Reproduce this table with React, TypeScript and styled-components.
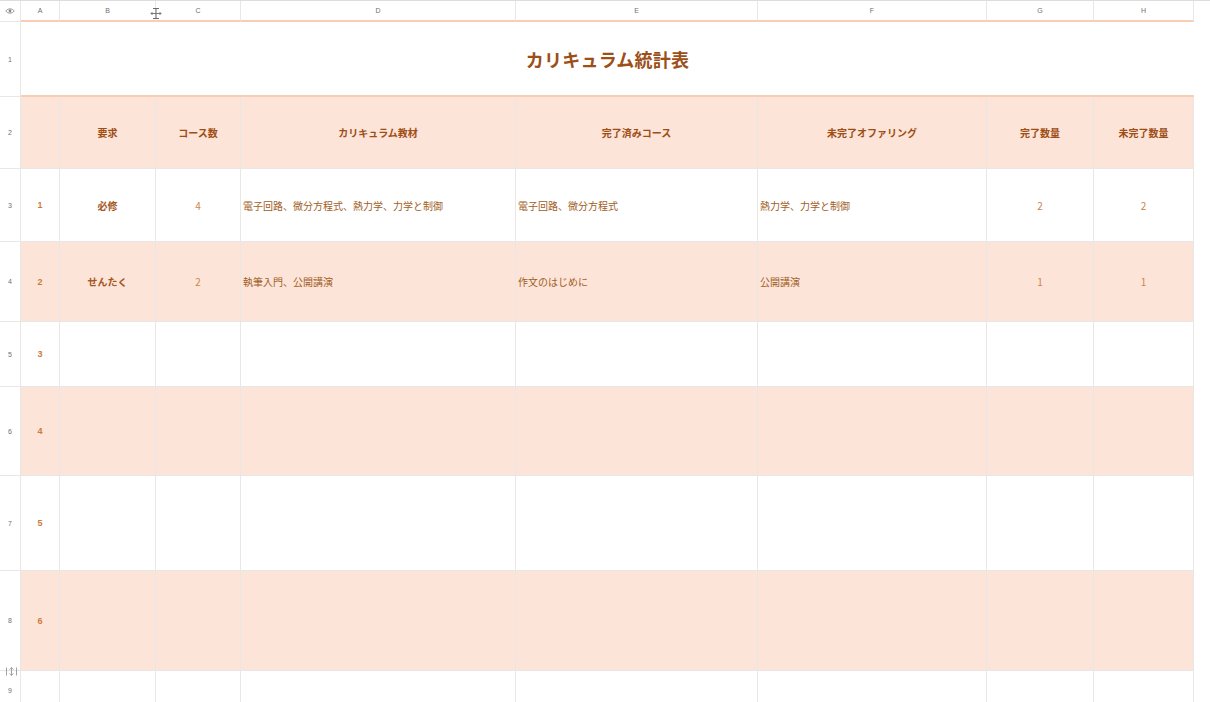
import React from "react";
import styled, { createGlobalStyle, css } from "styled-components";

const Global = createGlobalStyle`
  html, body { margin: 0; padding: 0; background: #ffffff; overflow: hidden; }
  body { font-family: "Noto Sans CJK JP", "Noto Sans", sans-serif; }
`;

const FILL = "#fce4d8";
const GRID = "#e9e7e6";
const ORANGE_LINE = "#f7cdb4";

const Sheet = styled.div`
  position: relative;
  display: grid;
  grid-template-columns: 21px 39px 96px 85px 275px 242px 229px 107px 100px 16px;
  grid-template-rows: 21px 75px 72px 73px 80px 65px 89px 95px 100px 40px;
  width: 1210px;
  height: 702px;
  overflow: hidden;
  border-top: 1px solid #dcdcdc;
  box-sizing: border-box;
`;

const ColHead = styled.div<{ $last?: boolean }>`
  box-sizing: border-box;
  display: flex;
  align-items: center;
  justify-content: center;
  font-family: "Liberation Sans", "Noto Sans", sans-serif;
  font-size: 7px;
  color: #6f6f6f;
  background: #ffffff;
  border-right: 1px solid ${GRID};
  border-bottom: 2px solid ${ORANGE_LINE};
`;

const Corner = styled(ColHead)`
  border-bottom: 1px solid ${GRID};
`;

const Spacer = styled.div``;

const RowNum = styled.div`
  box-sizing: border-box;
  display: flex;
  align-items: center;
  justify-content: center;
  font-family: "Liberation Sans", "Noto Sans", sans-serif;
  font-size: 7px;
  color: #707070;
  background: #ffffff;
  border-right: 1px solid ${GRID};
  border-bottom: 1px solid ${GRID};
`;

const TitleCell = styled.div`
  grid-column: 2 / span 8;
  box-sizing: border-box;
  display: flex;
  align-items: center;
  justify-content: center;
  font-size: 18px;
  font-weight: 700;
  color: #9c4f18;
  border-bottom: 2px solid ${ORANGE_LINE};
  letter-spacing: 0.2px;
`;

type Align = "left" | "center";
type Tone = "head" | "bold" | "num" | "text" | "index";

const toneStyles: Record<Tone, ReturnType<typeof css>> = {
  head: css`font-weight: 700; color: #9e4d15;`,
  bold: css`font-weight: 700; color: #a3561d;`,
  num: css`font-weight: 400; color: #cf8448;`,
  text: css`font-weight: 400; color: #a15d25;`,
  index: css`font-weight: 700; color: #c97d3f; font-family: "Liberation Sans", sans-serif; font-size: 9px;`,
};

const Cell = styled.div<{ $fill?: boolean; $align?: Align; $tone?: Tone }>`
  box-sizing: border-box;
  display: flex;
  align-items: center;
  justify-content: ${(p) => (p.$align === "left" ? "flex-start" : "center")};
  padding: ${(p) => (p.$align === "left" ? "0 2px" : "0")};
  font-size: 10px;
  white-space: nowrap;
  background: ${(p) => (p.$fill ? FILL : "#ffffff")};
  border-right: 1px solid ${GRID};
  border-bottom: 1px solid ${GRID};
  ${(p) => toneStyles[p.$tone || "text"]}
`;

const CursorMark = styled.svg`
  position: absolute;
  left: 150px;
  top: 6px;
`;

const RowHandle = styled.svg`
  position: absolute;
  left: 6px;
  top: 666px;
`;

const EyeIcon = () => (
  <svg width="10" height="8" viewBox="0 0 10 8">
    <path d="M0.8 4 C2.5 1.2 7.5 1.2 9.2 4 C7.5 6.8 2.5 6.8 0.8 4 Z" fill="none" stroke="#8a8a8a" strokeWidth="0.9" />
    <circle cx="5" cy="4" r="1.4" fill="#8a8a8a" />
  </svg>
);

const cols = ["A", "B", "C", "D", "E", "F", "G", "H"];

type RowData = {
  idx: string;
  req: string;
  count: string;
  mat: string;
  done: string;
  undone: string;
  dn: string;
  un: string;
};

const rows: (RowData | null)[] = [
  { idx: "1", req: "必修", count: "4", mat: "電子回路、微分方程式、熱力学、力学と制御", done: "電子回路、微分方程式", undone: "熱力学、力学と制御", dn: "2", un: "2" },
  { idx: "2", req: "せんたく", count: "2", mat: "執筆入門、公開講演", done: "作文のはじめに", undone: "公開講演", dn: "1", un: "1" },
  { idx: "3", req: "", count: "", mat: "", done: "", undone: "", dn: "", un: "" },
  { idx: "4", req: "", count: "", mat: "", done: "", undone: "", dn: "", un: "" },
  { idx: "5", req: "", count: "", mat: "", done: "", undone: "", dn: "", un: "" },
  { idx: "6", req: "", count: "", mat: "", done: "", undone: "", dn: "", un: "" },
  null,
];

const headers = ["", "要求", "コース数", "カリキュラム教材", "完了済みコース", "未完了オファリング", "完了数量", "未完了数量"];

export default function App() {
  return (
    <>
      <Global />
      <Sheet>
        <Corner>
          <EyeIcon />
        </Corner>
        {cols.map((c) => (
          <ColHead key={c}>{c === "E" ? "E" : c}</ColHead>
        ))}
        <Spacer />

        <RowNum>1</RowNum>
        <TitleCell>カリキュラム統計表</TitleCell>
        <Spacer />

        <RowNum>2</RowNum>
        {headers.map((h, i) => (
          <Cell key={i} $fill $tone="head">
            {h}
          </Cell>
        ))}
        <Spacer />

        {rows.map((r, i) => {
          const rowNo = i + 3;
          const fill = rowNo % 2 === 0;
          if (!r) {
            return (
              <React.Fragment key={rowNo}>
                <RowNum>{rowNo}</RowNum>
                {cols.map((c) => (
                  <Cell key={c} />
                ))}
                <Spacer />
              </React.Fragment>
            );
          }
          return (
            <React.Fragment key={rowNo}>
              <RowNum>{rowNo}</RowNum>
              <Cell $fill={fill} $tone="index">{r.idx}</Cell>
              <Cell $fill={fill} $tone="bold">{r.req}</Cell>
              <Cell $fill={fill} $tone="num">{r.count}</Cell>
              <Cell $fill={fill} $align="left" $tone="text">{r.mat}</Cell>
              <Cell $fill={fill} $align="left" $tone="text">{r.done}</Cell>
              <Cell $fill={fill} $align="left" $tone="text">{r.undone}</Cell>
              <Cell $fill={fill} $tone="num">{r.dn}</Cell>
              <Cell $fill={fill} $tone="num">{r.un}</Cell>
              <Spacer />
            </React.Fragment>
          );
        })}

        <CursorMark width="12" height="13" viewBox="0 0 12 13">
          <path d="M3 1.5 H9 M3 11.5 H9 M6 1.5 V11.5" stroke="#6d6d6d" strokeWidth="1" fill="none" />
          <path d="M1 6.5 H11 M2.5 5 L1 6.5 L2.5 8 M9.5 5 L11 6.5 L9.5 8" stroke="#6d6d6d" strokeWidth="0.9" fill="none" />
        </CursorMark>
        <RowHandle width="11" height="9" viewBox="0 0 11 9">
          <path d="M0.5 0.5 V8.5 M10.5 0.5 V8.5" stroke="#8a8a8a" strokeWidth="0.8" />
          <path d="M5.5 0.5 V8.5 M3.5 2.5 L5.5 0.8 L7.5 2.5 M3.5 6.5 L5.5 8.2 L7.5 6.5" stroke="#8a8a8a" strokeWidth="0.8" fill="none" />
        </RowHandle>
      </Sheet>
    </>
  );
}
